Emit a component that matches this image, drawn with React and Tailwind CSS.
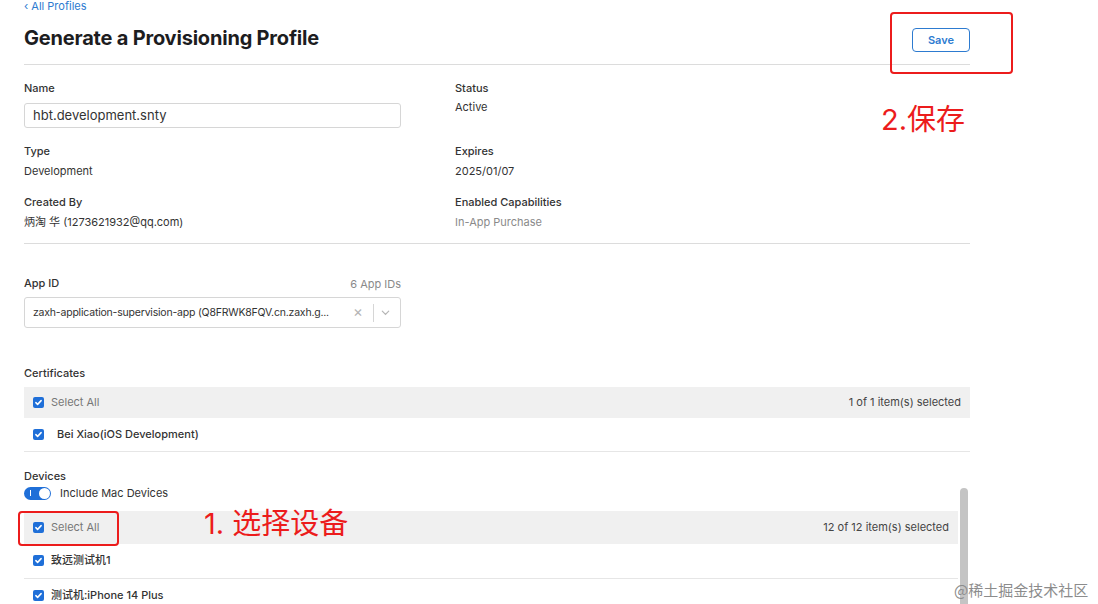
import React from 'react';

const font = { fontFamily: 'Inter, "Noto Sans CJK SC", sans-serif' };

const Check = () => (
  <span className="w-[11px] h-[11px] rounded-[2px] bg-[#1f6fd8] flex items-center justify-center shrink-0">
    <svg viewBox="0 0 12 12" className="w-[9px] h-[9px]" fill="none" stroke="white" strokeWidth="2" strokeLinecap="round" strokeLinejoin="round">
      <path d="M2.5 6.2l2.3 2.3L9.5 3.5" />
    </svg>
  </span>
);

const Field = ({ label, children, className = '' }) => (
  <div className={className}>
    <div className="text-[11px] font-medium text-[#333] leading-[14px]">{label}</div>
    {children}
  </div>
);

const App = () => {
  const devices = ['致远测试机1', '测试机:iPhone 14 Plus'];

  return (
    <div className="relative w-[1098px] h-[604px] overflow-hidden bg-white text-[#333]" style={font}>
      <div className="ml-6 w-[946px]">
        <div className="text-[11px] leading-[12px] text-[#2d7bd0]">‹ All Profiles</div>

        <div className="flex items-center justify-between mt-[11px] h-[30px]">
          <h1 className="text-[20px] font-bold text-[#1d1d1f] tracking-[-0.2px]">Generate a Provisioning Profile</h1>
          <button className="mt-[4px] w-[58px] h-[24px] border border-[#2d7bd0] rounded-[4px] text-[11px] font-semibold text-[#2d7bd0]">
            Save
          </button>
        </div>

        <div className="mt-[11px] h-px bg-[#dcdcdc]" />

        <div className="grid grid-cols-[431px_1fr] mt-[16px]">
          <Field label="Name">
            <div className="mt-[8px] w-[377px] h-[25px] border border-[#d6d6d6] rounded-[3px] px-[8px] flex items-center text-[13px] text-[#333]">
              hbt.development.snty
            </div>
          </Field>
          <Field label="Status">
            <div className="mt-[5px] text-[11px] leading-[14px]">Active</div>
          </Field>

          <Field label="Type" className="mt-[16px]">
            <div className="mt-[6px] text-[11px] leading-[14px]">Development</div>
          </Field>
          <Field label="Expires" className="mt-[16px]">
            <div className="mt-[6px] text-[11px] leading-[14px]">2025/01/07</div>
          </Field>

          <Field label="Created By" className="mt-[17px]">
            <div className="mt-[6px] text-[11px] leading-[14px]">炳淘 华 (1273621932@qq.com)</div>
          </Field>
          <Field label="Enabled Capabilities" className="mt-[17px]">
            <div className="mt-[6px] text-[11px] leading-[14px] text-[#8a8a8a]">In-App Purchase</div>
          </Field>
        </div>

        <div className="mt-[14px] h-px bg-[#dcdcdc]" />

        <div className="mt-[31px] w-[377px]">
          <div className="flex items-center justify-between">
            <span className="text-[11px] font-medium leading-[14px]">App ID</span>
            <span className="text-[11px] text-[#8a8a8a] leading-[14px] mt-[2px]">6 App IDs</span>
          </div>
          <div className="mt-[6px] h-[31px] border border-[#d6d6d6] rounded-[3px] flex items-center pl-[8px] pr-[6px]">
            <span className="flex-1 text-[10.5px] tracking-[-0.2px] whitespace-nowrap text-[#333]">zaxh-application-supervision-app (Q8FRWK8FQV.cn.zaxh.g...</span>
            <span className="text-[#b5b5b5] text-[15px] w-[18px] text-center">×</span>
            <span className="w-px h-[18px] bg-[#d6d6d6] mx-[6px]" />
            <svg viewBox="0 0 12 12" className="w-[11px] h-[11px] mr-[3px]" fill="none" stroke="#b5b5b5" strokeWidth="1.3" strokeLinecap="round">
              <path d="M2.5 4.5L6 8l3.5-3.5" />
            </svg>
          </div>
        </div>

        <div className="mt-[38px] text-[11px] font-medium leading-[14px]">Certificates</div>
        <div className="mt-[7px]">
          <div className="h-[31px] bg-[#f0f0f0] flex items-center pl-[9px] pr-[9px] gap-[7px]">
            <Check />
            <span className="flex-1 text-[11px] text-[#777]">Select All</span>
            <span className="text-[11px] text-[#444]">1 of 1 item(s) selected</span>
          </div>
          <div className="h-[34px] border-b border-[#e6e6e6] flex items-center pl-[9px] gap-[13px]">
            <Check />
            <span className="text-[11px] font-medium text-[#333]">Bei Xiao(iOS Development)</span>
          </div>
        </div>

        <div className="mt-[17px] text-[11px] font-medium leading-[14px]">Devices</div>
        <div className="mt-[2px] flex items-center gap-[9px]">
          <span className="w-[27px] h-[13px] rounded-full bg-[#1f6fd8] flex items-center justify-end pr-[1px] relative">
            <span className="absolute left-[6px] top-[3px] w-px h-[6px] bg-white" />
            <span className="w-[11px] h-[11px] rounded-full bg-white" />
          </span>
          <span className="text-[11px] text-[#333]">Include Mac Devices</span>
        </div>

        <div className="mt-[-6px] flex">
          <div className="flex-1 pt-[15px]">
            <div className="h-[33px] bg-[#f0f0f0] flex items-center pl-[9px] pr-[9px] gap-[7px]">
              <Check />
              <span className="flex-1 text-[11px] text-[#777]">Select All</span>
              <span className="text-[11px] text-[#444]">12 of 12 item(s) selected</span>
            </div>
            {devices.map((d) => (
              <div key={d} className="h-[35px] border-b border-[#e6e6e6] flex items-center pl-[9px] gap-[7px]">
                <Check />
                <span className="text-[11px] font-medium text-[#333]">{d}</span>
              </div>
            ))}
          </div>
          <div className="w-[12px] flex justify-center -mt-[8px]">
            <div className="w-[8px] h-[150px] rounded-full bg-[#c4c4c4]" />
          </div>
        </div>
      </div>

      {/* annotations */}
      <div className="absolute left-[890px] top-[12px] w-[123px] h-[62px] border-2 border-[#ec1c1c] rounded-[4px]" />
      <div className="absolute left-[881px] top-[100px] text-[29px] leading-[40px] text-[#ec1c1c]">2.保存</div>
      <div className="absolute left-[18px] top-[511px] w-[101px] h-[35px] border-2 border-[#ec1c1c] rounded-[4px]" />
      <div className="absolute left-[204px] top-[504px] text-[29px] leading-[40px] text-[#ec1c1c]">1. 选择设备</div>
      <div className="absolute left-[954px] top-[580px] text-[15px] leading-[20px] text-[#8c8c8c] whitespace-nowrap" style={{ fontFamily: '"Noto Sans CJK SC", serif' }}>
        @稀土掘金技术社区
      </div>
    </div>
  );
};

export default App;
